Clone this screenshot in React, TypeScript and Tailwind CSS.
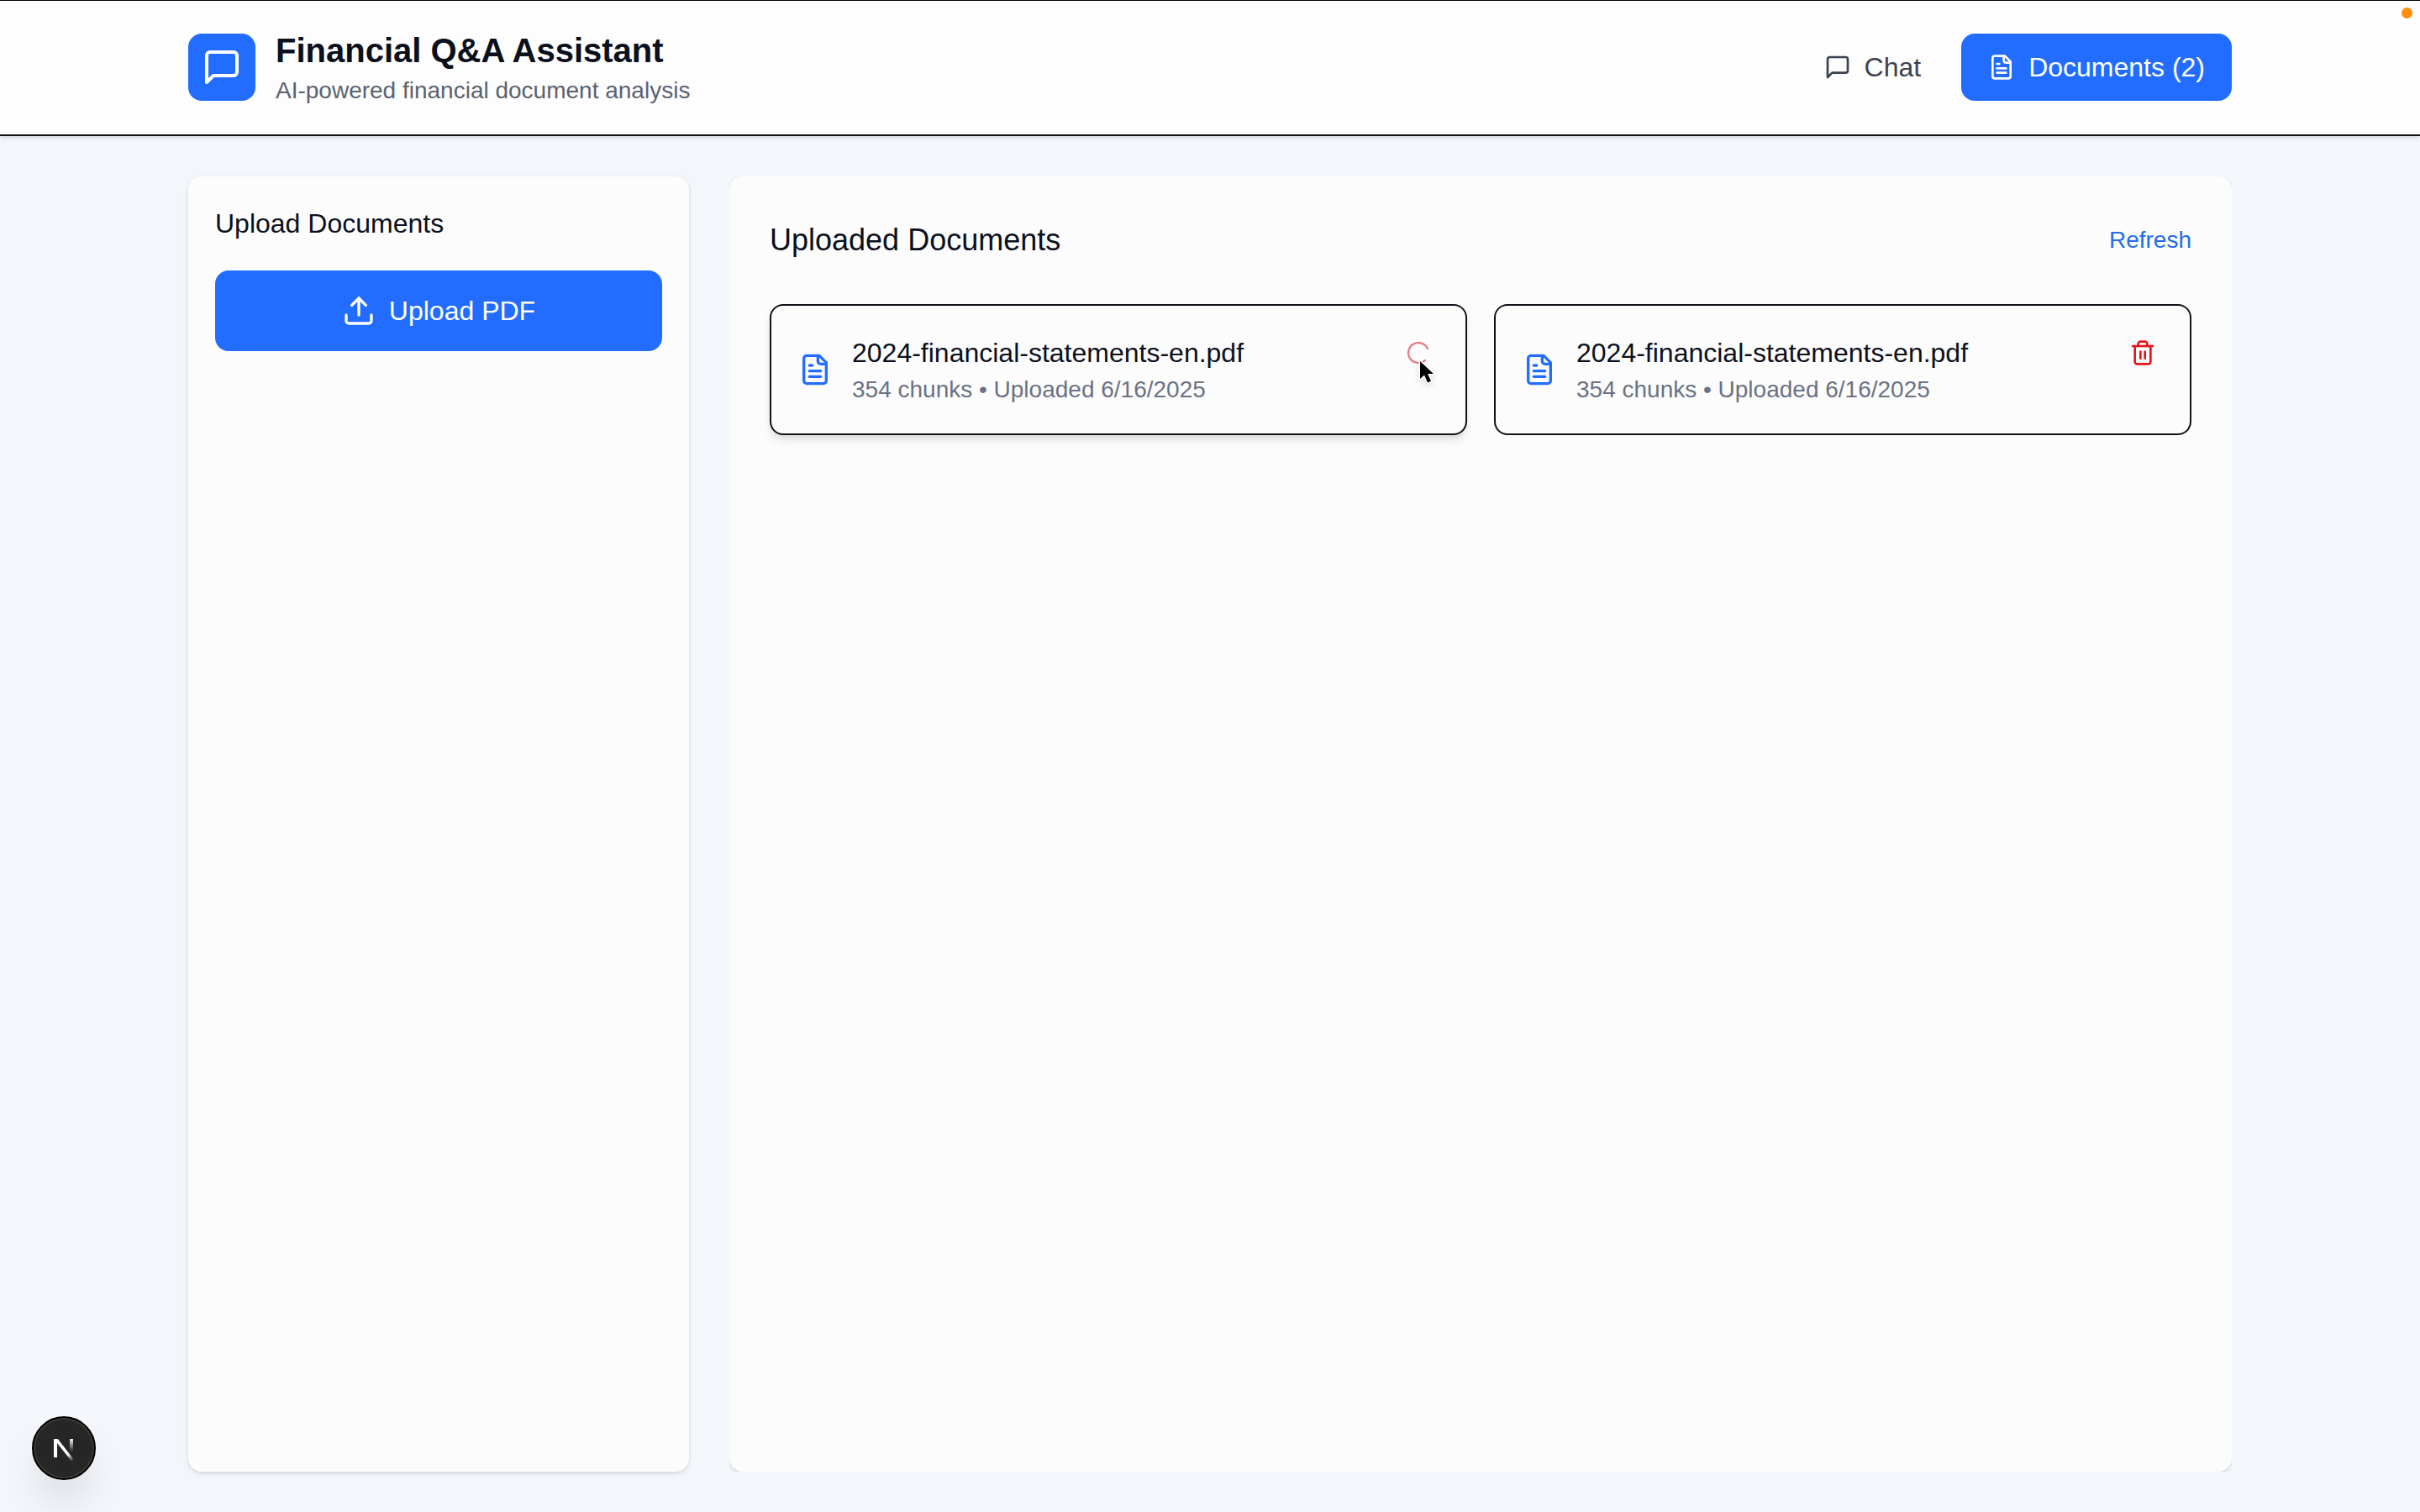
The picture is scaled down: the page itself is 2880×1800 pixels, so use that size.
import type { ReactNode } from 'react'

type Doc = { id: number; name: string; chunks: number; uploaded: string; deleting: boolean }

const documents: Doc[] = [
  { id: 1, name: '2024-financial-statements-en.pdf', chunks: 354, uploaded: '6/16/2025', deleting: true },
  { id: 2, name: '2024-financial-statements-en.pdf', chunks: 354, uploaded: '6/16/2025', deleting: false },
]

type IconProps = { className: string }

function Icon({ className, children }: IconProps & { children: ReactNode }) {
  return (
    <svg
      viewBox="0 0 24 24"
      className={className}
      fill="none"
      stroke="currentColor"
      strokeWidth="2"
      strokeLinecap="round"
      strokeLinejoin="round"
      aria-hidden="true"
    >
      {children}
    </svg>
  )
}

function MessageIcon({ className }: IconProps) {
  return (
    <Icon className={className}>
      <path d="M21 15a2 2 0 0 1-2 2H7l-4 4V5a2 2 0 0 1 2-2h14a2 2 0 0 1 2 2z" />
    </Icon>
  )
}

function FileIcon({ className }: IconProps) {
  return (
    <Icon className={className}>
      <path d="M15 2H6a2 2 0 0 0-2 2v16a2 2 0 0 0 2 2h12a2 2 0 0 0 2-2V7Z" />
      <path d="M14 2v4a2 2 0 0 0 2 2h4" />
      <path d="M10 9H8" />
      <path d="M16 13H8" />
      <path d="M16 17H8" />
    </Icon>
  )
}

function UploadIcon({ className }: IconProps) {
  return (
    <Icon className={className}>
      <path d="M21 15v4a2 2 0 0 1-2 2H5a2 2 0 0 1-2-2v-4" />
      <path d="m17 8-5-5-5 5" />
      <path d="M12 3v12" />
    </Icon>
  )
}

function TrashIcon({ className }: IconProps) {
  return (
    <Icon className={className}>
      <path d="M3 6h18" />
      <path d="M19 6v14c0 1-1 2-2 2H7c-1 0-2-1-2-2V6" />
      <path d="M8 6V4c0-1 1-2 2-2h4c1 0 2 1 2 2v2" />
      <path d="M10 11v6" />
      <path d="M14 11v6" />
    </Icon>
  )
}

function Header() {
  return (
    <header className="border-b-2 border-[#101318] bg-[#fdfdfd] shadow-[0_2px_6px_rgba(0,0,0,0.1),0_2px_4px_-2px_rgba(0,0,0,0.1)]">
      <div className="mx-auto flex max-w-[2560px] items-center justify-between px-16 py-8">
        <div className="flex items-center gap-6">
          <div className="rounded-2xl bg-[#226dff] p-4 text-white">
            <MessageIcon className="size-12" />
          </div>
          <div>
            <h1 className="text-[40px] leading-[56px] font-bold text-[#0b101c]">Financial Q&amp;A Assistant</h1>
            <p className="text-[28px] leading-[40px] text-[#5a6270]">AI-powered financial document analysis</p>
          </div>
        </div>
        <nav className="flex gap-4">
          <button type="button" className="flex items-center gap-4 rounded-2xl px-8 py-4 text-[#3b4250]">
            <MessageIcon className="size-8" />
            Chat
          </button>
          <button type="button" className="flex items-center gap-4 rounded-2xl bg-[#226dff] px-8 py-4 text-white">
            <FileIcon className="size-8" />
            Documents ({documents.length})
          </button>
        </nav>
      </div>
    </header>
  )
}

function Pointer() {
  return (
    <svg viewBox="0 0 22 32" className="absolute top-8 left-6 h-8 w-[22px] drop-shadow-md" aria-hidden="true">
      <path
        d="M2 2v21l5-4.5 4 9 4-1.7-3.9-8.8h6.9z"
        fill="#000"
        stroke="#fff"
        strokeWidth="3"
        strokeLinejoin="round"
        paintOrder="stroke"
      />
    </svg>
  )
}

function DocumentCard({ doc }: { doc: Doc }) {
  return (
    <li
      className={
        doc.deleting
          ? 'flex items-start justify-between rounded-2xl border-2 border-[#101318] p-8 shadow-[0_8px_12px_-2px_rgba(0,0,0,0.1),0_4px_8px_-4px_rgba(0,0,0,0.1)]'
          : 'flex items-start justify-between rounded-2xl border-2 border-[#101318] p-8'
      }
    >
      <div className="flex items-center gap-6">
        <FileIcon className="size-10 text-[#226dff]" />
        <div>
          <h3 className="text-[#0b101c]">{doc.name}</h3>
          <p className="text-[28px] leading-[40px] text-[#6a7282]">
            {doc.chunks} chunks • Uploaded {doc.uploaded}
          </p>
        </div>
      </div>
      {doc.deleting ? (
        <button type="button" aria-label="Deleting document" className="relative p-2">
          <svg viewBox="0 0 32 32" className="size-8" fill="none" aria-hidden="true">
            <path
              d="M27 11.1A12 12 0 1 0 23.9 25.1"
              stroke="#e58184"
              strokeWidth="2.4"
              strokeLinecap="round"
            />
          </svg>
          <Pointer />
        </button>
      ) : (
        <button type="button" aria-label="Delete document" className="p-2 text-[#e7131d]">
          <TrashIcon className="size-8" />
        </button>
      )}
    </li>
  )
}

function DevBadge() {
  return (
    <button
      type="button"
      aria-label="Open Next.js Dev Tools"
      className="fixed bottom-[38px] left-[38px] flex size-[76px] items-center justify-center rounded-full border-2 border-black bg-[#262626] shadow-[0_32px_48px_-8px_rgba(0,0,0,0.12)] ring-2 ring-[#3a3a32] ring-inset"
    >
      <svg viewBox="0 0 26 24" className="h-6 w-[26px] overflow-visible" fill="none" aria-hidden="true">
        <defs>
          <linearGradient id="diagonal" x1="14" y1="14" x2="24" y2="27" gradientUnits="userSpaceOnUse">
            <stop stopColor="#fff" />
            <stop offset="0.4" stopColor="#fff" />
            <stop offset="1" stopColor="#fff" stopOpacity="0" />
          </linearGradient>
          <linearGradient id="stem" x1="22" y1="0" x2="22" y2="16" gradientUnits="userSpaceOnUse">
            <stop stopColor="#fff" />
            <stop offset="1" stopColor="#fff" stopOpacity="0" />
          </linearGradient>
        </defs>
        <rect x="1" y="1" width="4" height="22" fill="#fff" />
        <path d="M1 1h4.8l19 24.4-2.6 2z" fill="url(#diagonal)" />
        <rect x="20" y="1" width="4" height="15" fill="url(#stem)" />
      </svg>
    </button>
  )
}

export default function App() {
  return (
    <div className="flex min-h-screen flex-col bg-[#f3f6fa] font-['Liberation_Sans',Arial,sans-serif] text-[32px] leading-[48px]">
      <div className="absolute inset-x-0 top-0 h-px bg-black" />
      <div className="absolute top-[9px] right-[9px] size-[13px] rounded-full bg-[#ff8d0a]" />
      <Header />
      <main className="mx-auto grid w-full max-w-[2560px] grow grid-cols-[1fr_3fr] gap-12 px-16 py-12">
        <aside className="rounded-2xl bg-[#fcfcfd] p-8 shadow-[0_2px_6px_rgba(0,0,0,0.1),0_2px_4px_-2px_rgba(0,0,0,0.1)]">
          <h2 className="mb-8 text-[#0b101c]">Upload Documents</h2>
          <button
            type="button"
            className="flex w-full items-center justify-center gap-4 rounded-2xl bg-[#226dff] py-6 text-white"
          >
            <UploadIcon className="size-10" />
            Upload PDF
          </button>
        </aside>
        <div className="flex overflow-hidden">
          <section className="grow rounded-2xl bg-[#fcfcfd] p-12 shadow-[0_2px_6px_rgba(0,0,0,0.1),0_2px_4px_-2px_rgba(0,0,0,0.1)]">
            <div className="mb-12 flex items-center justify-between">
              <h2 className="text-[36px] leading-[56px] text-[#0b101c]">Uploaded Documents</h2>
              <button type="button" className="text-[28px] leading-[40px] text-[#226de8]">
                Refresh
              </button>
            </div>
            <ul className="grid grid-cols-2 gap-8">
              {documents.map((doc) => (
                <DocumentCard key={doc.id} doc={doc} />
              ))}
            </ul>
          </section>
        </div>
      </main>
      <DevBadge />
    </div>
  )
}
